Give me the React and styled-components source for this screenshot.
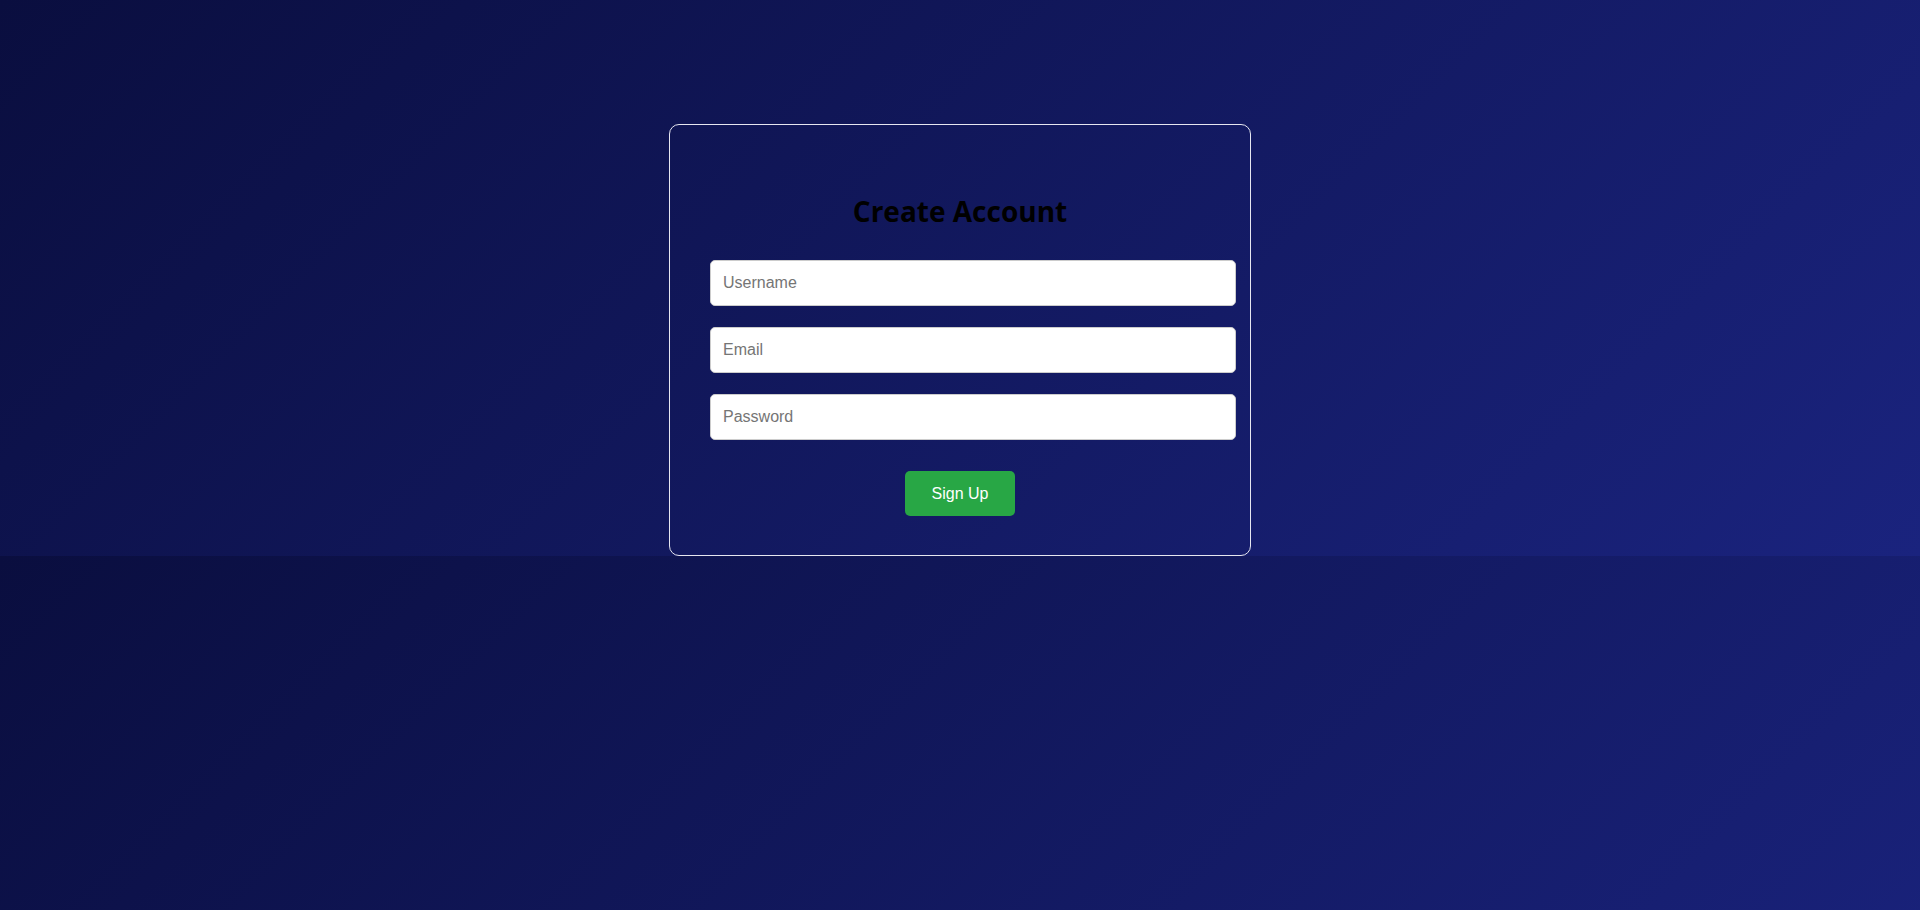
import React from 'react'
import styled, { createGlobalStyle } from 'styled-components'

const GlobalStyle = createGlobalStyle`
  body {
    margin: 0;
    font-family: 'Liberation Sans', Arial, sans-serif;
    background: linear-gradient(135deg, #0a0e3f, #1a237e);
  }
`

const Page = styled.main`
  padding-top: 124px;
`

const Card = styled.section`
  width: 500px;
  margin: 0 auto;
  padding: 0 40px 39px;
  border: 1px solid #e6e6f0;
  border-radius: 10px;
`

const Title = styled.h2`
  margin: 0;
  padding: 66px 0 28px;
  text-align: center;
  font-family: 'Open Sans', 'Noto Sans', sans-serif;
  font-size: 28px;
  font-weight: 700;
  line-height: 41px;
  color: #000;
`

const Form = styled.form`
  display: flex;
  flex-direction: column;
`

const Input = styled.input`
  display: block;
  width: 100%;
  box-sizing: content-box;
  margin: 0 0 21px;
  padding: 12px;
  height: 20px;
  font-family: 'Liberation Sans', Arial, sans-serif;
  font-size: 16px;
  color: #333;
  background: #fff;
  border: 1px solid #ccc;
  border-radius: 5px;

  &::placeholder {
    color: #757575;
  }

  &:last-of-type {
    margin-bottom: 31px;
  }

  &:focus {
    outline: none;
  }
`

const Button = styled.button`
  align-self: center;
  cursor: pointer;
  padding: 13px 27px;
  font-family: 'Liberation Sans', Arial, sans-serif;
  font-size: 16px;
  line-height: 19px;
  color: #fff;
  background: #28a745;
  border: none;
  border-radius: 5px;

  &:hover {
    opacity: 0.9;
  }
`

const App = () => {
  return (
    <>
      <GlobalStyle />
      <Page>
        <Card>
          <Title>Create Account</Title>
          <Form onSubmit={e => e.preventDefault()}>
            <Input type='text' placeholder='Username' />
            <Input type='email' placeholder='Email' />
            <Input type='password' placeholder='Password' />
            <Button type='submit'>Sign Up</Button>
          </Form>
        </Card>
      </Page>
    </>
  )
}

export default App
